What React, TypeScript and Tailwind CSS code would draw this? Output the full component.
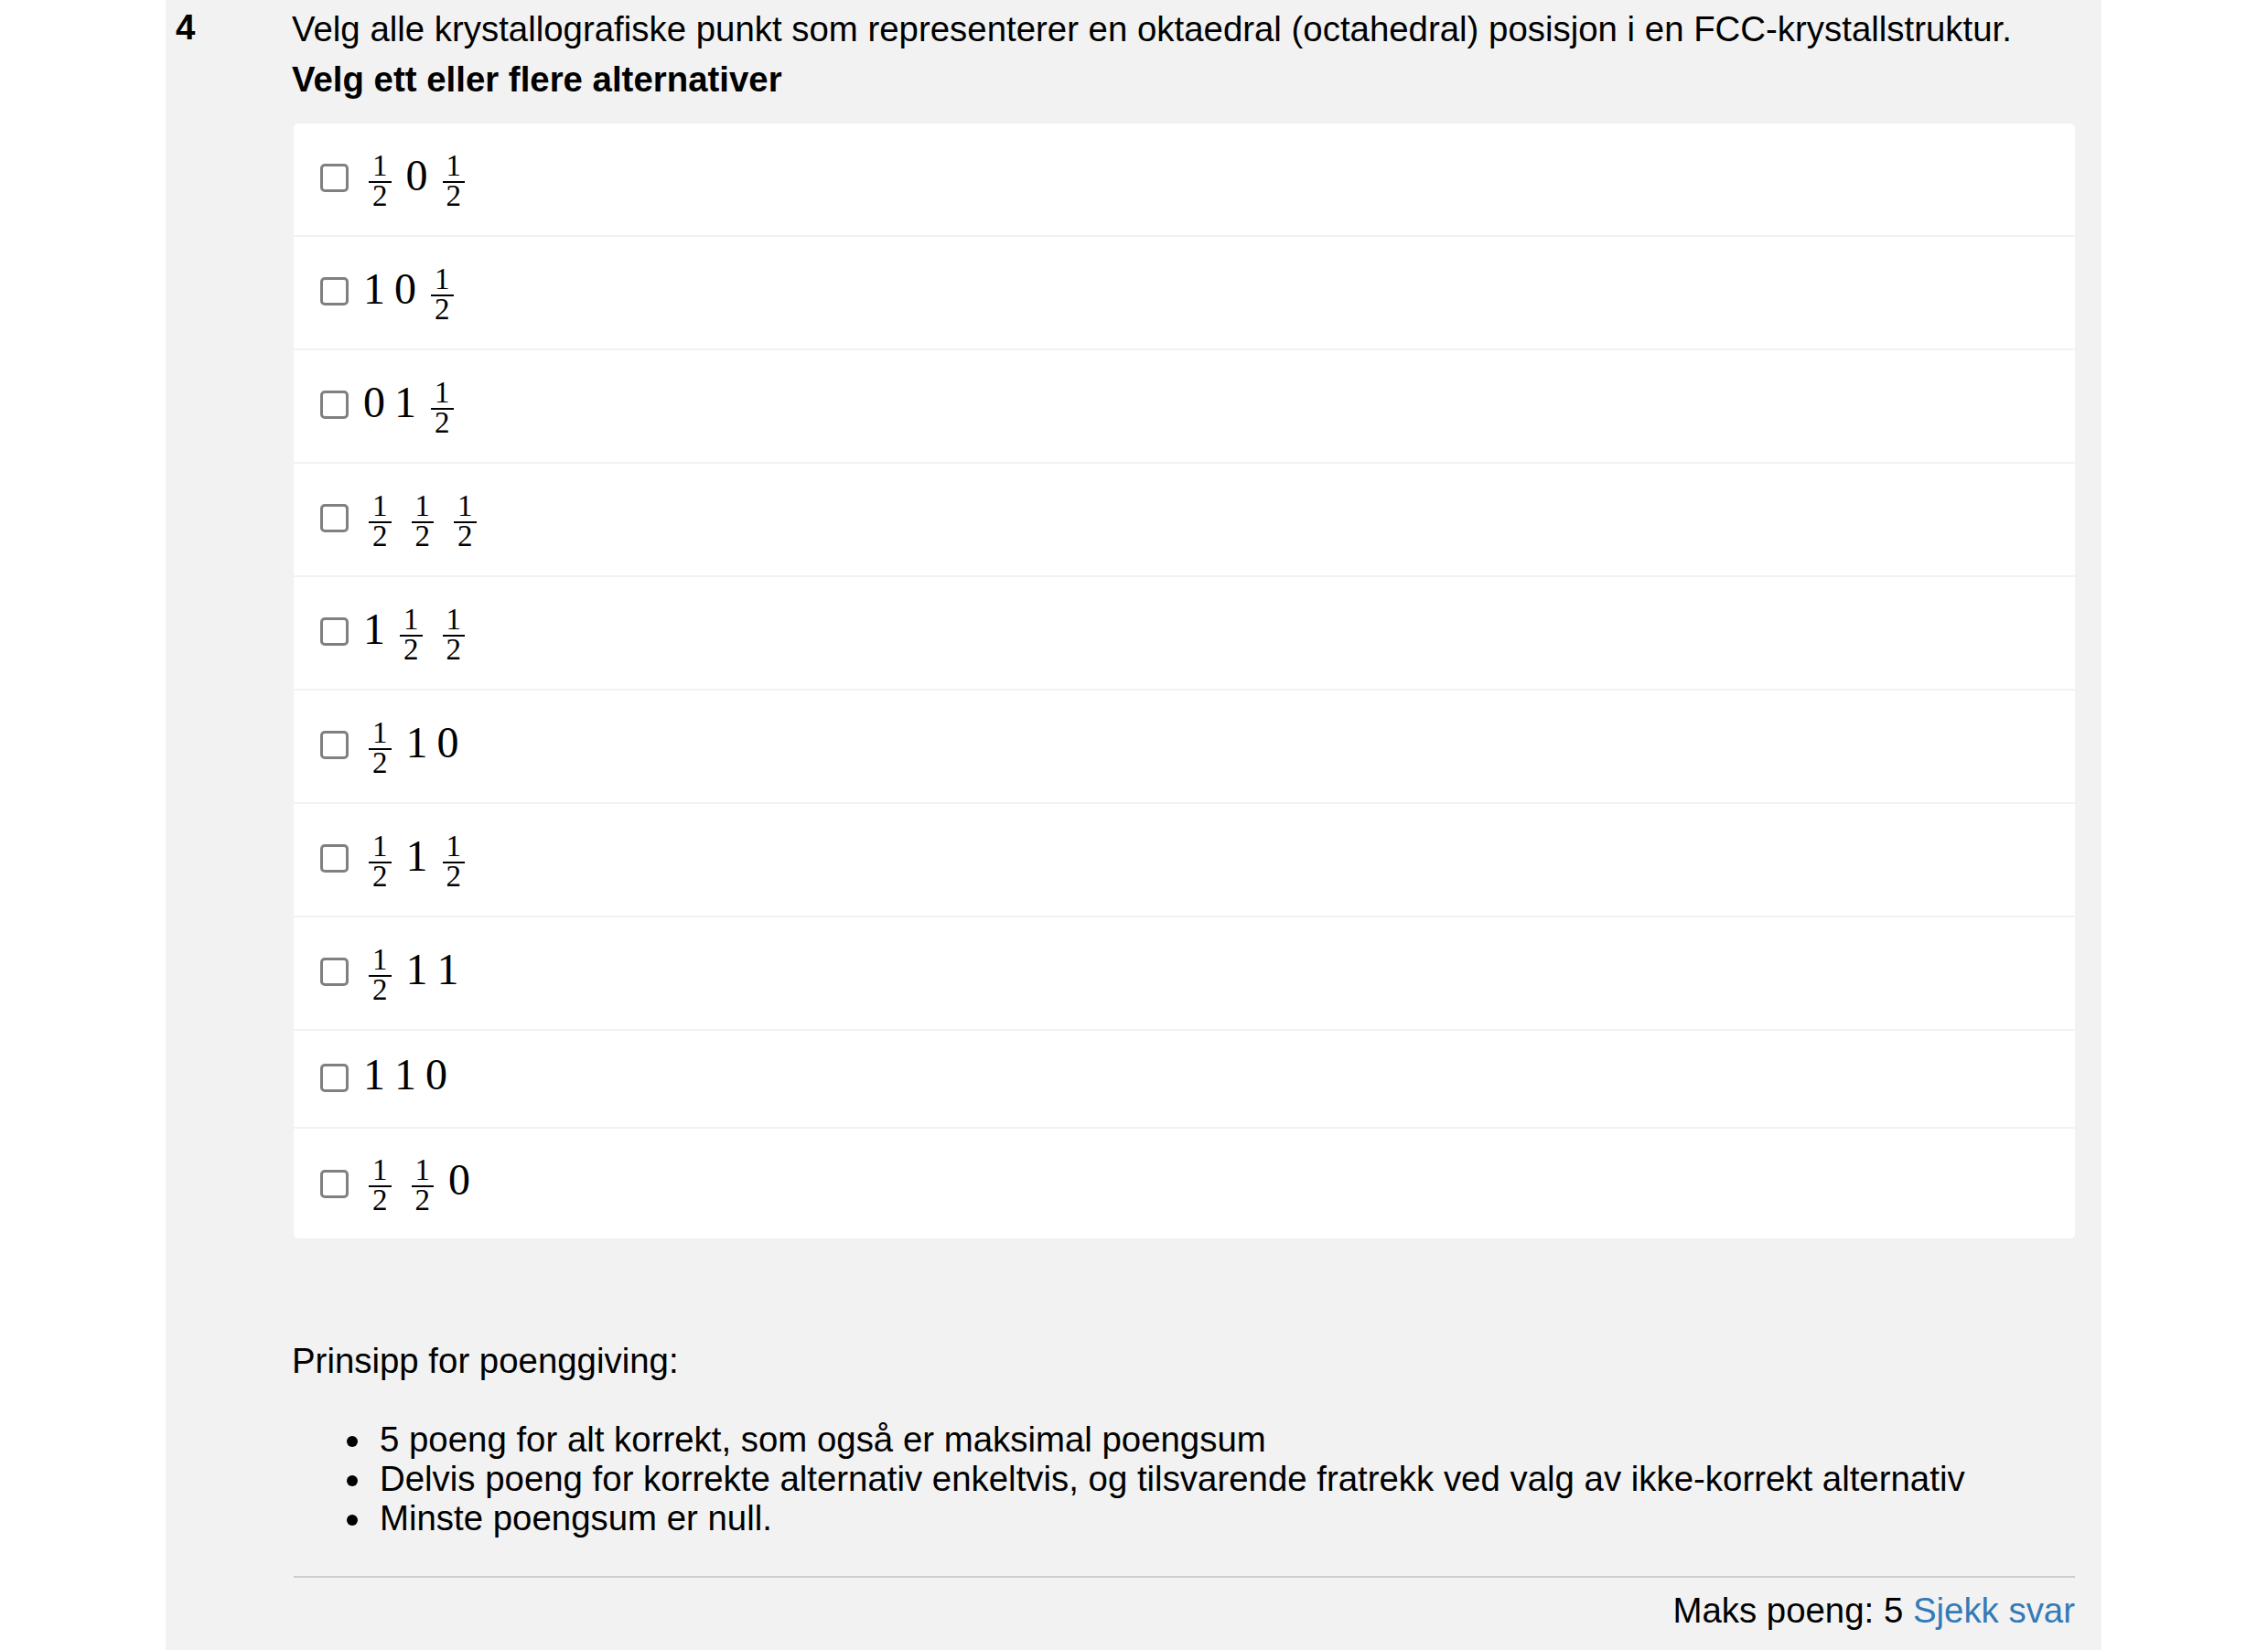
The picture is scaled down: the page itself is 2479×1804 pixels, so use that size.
import React from "react";

type Item = "F" | "0" | "1";

const rows: { items: Item[]; h: string; cb: string; mb: string }[] = [
  { items: ["F", "0", "F"], h: "h-[122px]", cb: "mb-[4px]", mb: "" },
  { items: ["1", "0", "F"], h: "h-[122px]", cb: "mb-[4px]", mb: "" },
  { items: ["0", "1", "F"], h: "h-[122px]", cb: "mb-[4px]", mb: "" },
  { items: ["F", "F", "F"], h: "h-[122px]", cb: "mb-[4px]", mb: "" },
  { items: ["1", "F", "F"], h: "h-[122px]", cb: "mb-[4px]", mb: "" },
  { items: ["F", "1", "0"], h: "h-[122px]", cb: "mb-[4px]", mb: "" },
  { items: ["F", "1", "F"], h: "h-[122px]", cb: "mb-[4px]", mb: "" },
  { items: ["F", "1", "1"], h: "h-[122px]", cb: "mb-[4px]", mb: "" },
  { items: ["1", "1", "0"], h: "h-[105px]", cb: "mb-[2px]", mb: "mb-[11px]" },
  { items: ["F", "F", "0"], h: "h-[120px]", cb: "", mb: "" },
];

function Frac({ last }: { last: boolean }) {
  return (
    <span
      className={
        "inline-flex flex-col align-[16px] ml-[6px] text-[33px] " +
        (last ? "mr-[6px]" : "mr-[16px]")
      }
    >
      <span className="block px-[4px] text-center leading-[33px]">1</span>
      <span className="block h-[2px] bg-black" />
      <span className="block px-[4px] text-center leading-[28px]">2</span>
    </span>
  );
}

function MathExpr({ items, mb }: { items: Item[]; mb: string }) {
  return (
    <span
      className={
        "inline-block whitespace-nowrap font-['Liberation_Serif','Times_New_Roman',serif] text-[48px] leading-[45px] text-black " +
        mb
      }
    >
      {items.map((it, i) => {
        const last = i === items.length - 1;
        if (it === "F") return <Frac key={i} last={last} />;
        return (
          <span key={i} className={last ? "" : "mr-[10px]"}>
            {it}
          </span>
        );
      })}
    </span>
  );
}

function Bullet({ children }: { children: React.ReactNode }) {
  return (
    <li className="flex">
      <span className="shrink-0 w-[12px] h-[12px] rounded-full bg-black mt-[18px] mr-[24px]" />
      <span>{children}</span>
    </li>
  );
}

export default function App() {
  return (
    <div className="min-h-screen bg-white font-['Liberation_Sans',Arial,sans-serif] text-black">
      <div className="ml-[181px] w-[2116px] min-h-[1804px] bg-[#f2f2f2] flex pr-[29px]">
        <div className="w-[138px] shrink-0 pl-[11px] pt-[8px] text-[38.4px] leading-[43px] font-bold">
          4
        </div>
        <div className="flex-1 min-w-0 pt-[10px] text-[38.4px] leading-[43px]">
          <p className="whitespace-nowrap">
            Velg alle krystallografiske punkt som representerer en oktaedral (octahedral) posisjon i en
            FCC-krystallstruktur.
          </p>
          <p className="mt-[12px] font-bold">Velg ett eller flere alternativer</p>

          <div className="mt-[27px] ml-[2px] flex flex-col gap-[2px] rounded-[5px] overflow-hidden">
            {rows.map((r, i) => (
              <label key={i} className={"flex items-center bg-white pl-[29px] " + r.h}>
                <input
                  type="checkbox"
                  className={
                    "appearance-none shrink-0 w-[31px] h-[31px] border-[3px] border-[#808080] rounded-[5px] bg-white mr-[16px] " +
                    r.cb
                  }
                />
                <MathExpr items={r.items} mb={r.mb} />
              </label>
            ))}
          </div>

          <p className="mt-[112px]">Prinsipp for poenggiving:</p>
          <ul className="mt-[43px] pl-[60px]">
            <Bullet>5 poeng for alt korrekt, som også er maksimal poengsum</Bullet>
            <Bullet>
              Delvis poeng for korrekte alternativ enkeltvis, og tilsvarende fratrekk ved valg av
              ikke-korrekt alternativ
            </Bullet>
            <Bullet>Minste poengsum er null.</Bullet>
          </ul>
          <div className="mt-[42px] ml-[2px] border-t-[2px] border-[#cccccc]" />
          <div className="mt-[14px] text-right">
            Maks poeng: 5 <span className="text-[#337ab7]">Sjekk svar</span>
          </div>
        </div>
      </div>
    </div>
  );
}
